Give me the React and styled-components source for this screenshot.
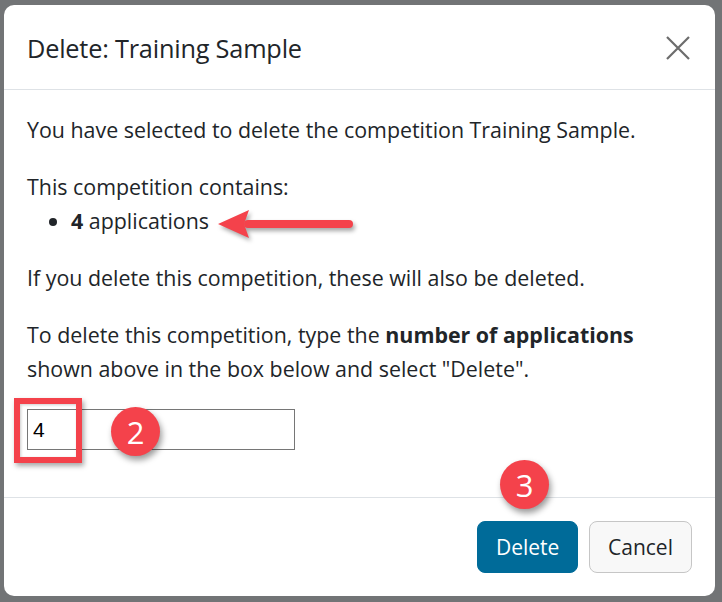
import React from "react";
import styled, { createGlobalStyle } from "styled-components";

const Global = createGlobalStyle`
  html, body { margin: 0; padding: 0; background: #727476; }
  body { font-family: "Open Sans", "Noto Sans", sans-serif; color: #212529; }
  * { box-sizing: border-box; }
`;

const Page = styled.div`
  position: relative;
  width: 722px;
  height: 602px;
  padding: 5px 7px 6px 4px;
  overflow: hidden;
`;

const Modal = styled.div`
  background: #fff;
  border-radius: 10px;
  height: 591px;
  display: flex;
  flex-direction: column;
  overflow: hidden;
`;

const Header = styled.div`
  height: 85px;
  flex: none;
  display: flex;
  align-items: center;
  justify-content: space-between;
  padding: 2px 24px 0 23px;
  border-bottom: 1px solid #dee2e6;
`;

const Title = styled.h5`
  margin: 0;
  font-size: 25.3px;
  font-weight: 500;
  letter-spacing: -0.2px;
  color: #212529;
`;

const Close = styled.button`
  border: 0;
  background: none;
  padding: 0;
  width: 26px;
  height: 26px;
  display: flex;
  align-items: center;
  justify-content: center;
  cursor: pointer;
`;

const Body = styled.div`
  padding: 23px 23px 0 23px;
  font-size: 21.4px;
  line-height: 34px;
  flex: 1;
`;

const Para = styled.p`
  margin: 0 0 ${(p) => (p.$tight ? "0" : "23px")} 0;
`;

const List = styled.ul`
  margin: 0 0 23px 0;
  padding-left: 44px;
`;

const Input = styled.input`
  display: block;
  width: 268px;
  height: 41px;
  border: 1px solid #767676;
  border-radius: 0;
  padding: 0 5px;
  font-family: "Liberation Sans", Arial, sans-serif;
  font-size: 21px;
  color: #000;
  outline: none;
`;

const Footer = styled.div`
  height: 99px;
  flex: none;
  border-top: 1px solid #dee2e6;
  display: flex;
  align-items: center;
  justify-content: flex-end;
  gap: 11px;
  padding: 0 23px 1px 0;
`;

const Button = styled.button`
  height: 52px;
  padding: 0 18px;
  border-radius: 8px;
  font-family: "Open Sans", "Noto Sans", sans-serif;
  font-size: 21px;
  border: 1px solid ${(p) => (p.$primary ? "#006b99" : "#c6c6c6")};
  background: ${(p) => (p.$primary ? "#006b99" : "#f8f8f8")};
  color: ${(p) => (p.$primary ? "#fff" : "#212529")};
  width: ${(p) => (p.$primary ? "101px" : "103px")};
  cursor: pointer;
`;

const RedBox = styled.div`
  position: absolute;
  left: 14px;
  top: 398px;
  width: 68px;
  height: 65px;
  border: 6px solid #f4424b;
  box-shadow: 2px 3px 5px rgba(0, 0, 0, 0.35), inset 1px 1px 3px rgba(0, 0, 0, 0.2);
`;

const Badge = styled.div`
  position: absolute;
  left: ${(p) => p.$x}px;
  top: ${(p) => p.$y}px;
  width: 49px;
  height: 49px;
  border-radius: 50%;
  background: #f4424b;
  color: #fff;
  font-family: "Open Sans", sans-serif;
  font-size: 31px;
  display: flex;
  align-items: center;
  justify-content: center;
  box-shadow: 2px 4px 6px rgba(0, 0, 0, 0.4);
`;

const Arrow = styled.svg`
  position: absolute;
  left: 212px;
  top: 205px;
  overflow: visible;
  filter: drop-shadow(2px 3px 2px rgba(0, 0, 0, 0.35));
`;

export default function App() {
  return (
    <>
      <Global />
      <Page>
        <Modal>
          <Header>
            <Title>Delete: Training Sample</Title>
            <Close aria-label="Close">
              <svg width="26" height="26" viewBox="0 0 26 26">
                <path d="M2 2 L24 24 M24 2 L2 24" stroke="#6c6c6c" strokeWidth="2.2" fill="none" />
              </svg>
            </Close>
          </Header>
          <Body>
            <Para>You have selected to delete the competition Training Sample.</Para>
            <Para $tight>This competition contains:</Para>
            <List>
              <li>
                <b>4</b> applications
              </li>
            </List>
            <Para>If you delete this competition, these will also be deleted.</Para>
            <Para>
              To delete this competition, type the <b>number of applications</b> shown above in the
              box below and select "Delete".
            </Para>
            <Input defaultValue="4" />
          </Body>
          <Footer>
            <Button $primary>Delete</Button>
            <Button>Cancel</Button>
          </Footer>
        </Modal>
        <RedBox />
        <Badge $x={111} $y={407}>2</Badge>
        <Badge $x={500} $y={460}>3</Badge>
        <Arrow width="145" height="40" viewBox="0 0 145 40">
          <path d="M36 19 L137 19" stroke="#f4424b" strokeWidth="8" strokeLinecap="round" />
          <path d="M6 19 L37 5 L32 19 L37 33 Z" fill="#f4424b" />
        </Arrow>
      </Page>
    </>
  );
}
